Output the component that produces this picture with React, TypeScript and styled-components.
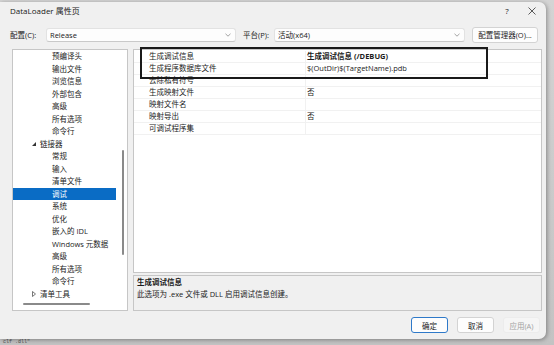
import React from 'react'
import styled, { createGlobalStyle } from 'styled-components'

const Global = createGlobalStyle`
  html, body {
    margin: 0;
    padding: 0;
    background: #c9c9c9;
  }
  body {
    font-family: "Open Sans", "Noto Sans CJK SC", sans-serif;
    font-size: 7.5px;
    color: #1b1b1b;
  }
`

const Desktop = styled.div`
  width: 554px;
  height: 345px;
  overflow: hidden;
  position: relative;
  background: linear-gradient(#d4d4d4, #c3c3c3);
`

const Backdrop = styled.div`
  position: absolute;
  left: 3px;
  bottom: 0;
  font-family: "Liberation Mono", monospace;
  font-size: 5px;
  line-height: 5px;
  color: #555;
`

const Window = styled.div`
  position: relative;
  margin-top: 2px;
  width: 546px;
  height: 337px;
  background: #f0f0f0;
  border-radius: 0 7px 7px 0;
  box-shadow: 1px 1px 4px rgba(0, 0, 0, 0.35);
  display: flex;
  flex-direction: column;
`

const TitleBar = styled.div`
  height: 17px;
  display: flex;
  align-items: center;
  padding: 0 10px;
  font-size: 8px;
  color: #202020;

  .title {
    flex: 1;
  }
  .help {
    width: 14px;
    text-align: center;
    margin-right: 14px;
    font-size: 8px;
  }
`

const ConfigRow = styled.div`
  display: flex;
  align-items: center;
  height: 15px;
  margin-top: 8px;
  padding-left: 10px;
`

const Label = styled.span<{ $w: number }>`
  width: ${(p) => p.$w}px;
  white-space: nowrap;
`

const Select = styled.div<{ $w: number }>`
  width: ${(p) => p.$w}px;
  height: 14px;
  box-sizing: border-box;
  background: #fdfdfd;
  border: 1px solid #e2e2e2;
  border-bottom-color: #c9c9c9;
  border-radius: 3px;
  display: flex;
  align-items: center;
  padding: 0 4px 0 3px;
  margin-right: 7px;

  span {
    flex: 1;
  }
`

const Button = styled.div<{ $w: number; $focus?: boolean; $disabled?: boolean }>`
  width: ${(p) => p.$w}px;
  height: 16px;
  box-sizing: border-box;
  display: flex;
  align-items: center;
  justify-content: center;
  border-radius: 3px;
  background: ${(p) => (p.$disabled ? '#f5f5f5' : '#fdfdfd')};
  border: 1px solid
    ${(p) => (p.$focus ? '#2e79c9' : p.$disabled ? '#ececec' : '#d3d3d3')};
  color: ${(p) => (p.$disabled ? '#a2a2a2' : '#1b1b1b')};
`

const Content = styled.div`
  display: flex;
  margin-top: 7px;
  padding-left: 12px;
  height: 262px;
  gap: 5px;
`

const TreePanel = styled.div`
  width: 116px;
  box-sizing: border-box;
  background: #fff;
  border: 1px solid #c6c6c6;
  display: flex;
  flex-direction: column;
`

const TreeBody = styled.div`
  flex: 1;
  display: flex;
`

const TreeList = styled.div`
  width: 103px;
`

const TreeRow = styled.div<{ $indent: number; $selected?: boolean }>`
  height: 12.5px;
  line-height: 12.5px;
  display: flex;
  align-items: center;
  padding-left: ${(p) => p.$indent}px;
  background: ${(p) => (p.$selected ? '#0a6cc5' : 'transparent')};
  color: ${(p) => (p.$selected ? '#fff' : '#1b1b1b')};
  white-space: nowrap;

  svg {
    margin-right: 4px;
  }
`

const VScroll = styled.div`
  flex: 1;
  display: flex;
  justify-content: center;
  padding-left: 2px;

  div {
    width: 2px;
    height: 105px;
    margin-top: 100px;
    background: #8a8a8a;
    border-radius: 1px;
  }
`

const HScroll = styled.div`
  height: 8px;
  padding-left: 10px;

  div {
    width: 67px;
    height: 2px;
    margin-top: 1px;
    background: #8a8a8a;
    border-radius: 1px;
  }
`

const RightColumn = styled.div`
  position: relative;
  width: 409px;
  display: flex;
  flex-direction: column;
  gap: 2px;
`

const Grid = styled.div`
  height: 224px;
  box-sizing: border-box;
  background: #fff;
  border: 1px solid #c6c6c6;
  padding-top: 1px;
`

const GridRow = styled.div<{ $bold?: boolean }>`
  display: flex;
  height: 12px;
  box-sizing: border-box;
  line-height: 11px;
  border-bottom: 1px solid #f1f1f1;

  .name {
    width: 172px;
    padding-left: 15px;
    box-sizing: border-box;
    border-right: 1px solid #f1f1f1;
  }
  .value {
    padding-left: 1px;
    font-weight: ${(p) => (p.$bold ? 700 : 400)};
  }
`

const Highlight = styled.div`
  position: absolute;
  left: 7px;
  top: -2px;
  width: 348px;
  height: 32px;
  box-sizing: border-box;
  border: 2px solid #1a1a1a;
  pointer-events: none;
`

const Description = styled.div`
  height: 36px;
  box-sizing: border-box;
  border: 1px solid #c6c6c6;
  background: #f0f0f0;
  padding-left: 3px;
  line-height: 12px;

  b {
    display: block;
    font-weight: 700;
  }
`

const Footer = styled.div`
  display: flex;
  justify-content: flex-end;
  gap: 9px;
  margin-top: 6px;
  padding-right: 6px;
`

const Chevron = () => (
  <svg width="6" height="4" viewBox="0 0 6 4">
    <path d="M0.5 0.8 L3 3.2 L5.5 0.8" fill="none" stroke="#8c8c8c" strokeWidth="0.8" />
  </svg>
)

const CloseIcon = () => (
  <svg width="8" height="8" viewBox="0 0 8 8">
    <path d="M0.5 0.5 L7.5 7.5 M7.5 0.5 L0.5 7.5" stroke="#333" strokeWidth="0.8" />
  </svg>
)

const Expanded = () => (
  <svg width="4" height="4" viewBox="0 0 4 4">
    <path d="M4 0 L4 4 L0 4 Z" fill="#333" />
  </svg>
)

const Collapsed = () => (
  <svg width="4" height="6" viewBox="0 0 4 6">
    <path d="M0.5 0.5 L3.5 3 L0.5 5.5 Z" fill="none" stroke="#555" strokeWidth="0.8" />
  </svg>
)

type Node = { text: string; level: 0 | 1; open?: boolean; selected?: boolean }

const tree: Node[] = [
  { text: '预编译头', level: 1 },
  { text: '输出文件', level: 1 },
  { text: '浏览信息', level: 1 },
  { text: '外部包含', level: 1 },
  { text: '高级', level: 1 },
  { text: '所有选项', level: 1 },
  { text: '命令行', level: 1 },
  { text: '链接器', level: 0, open: true },
  { text: '常规', level: 1 },
  { text: '输入', level: 1 },
  { text: '清单文件', level: 1 },
  { text: '调试', level: 1, selected: true },
  { text: '系统', level: 1 },
  { text: '优化', level: 1 },
  { text: '嵌入的 IDL', level: 1 },
  { text: 'Windows 元数据', level: 1 },
  { text: '高级', level: 1 },
  { text: '所有选项', level: 1 },
  { text: '命令行', level: 1 },
  { text: '清单工具', level: 0, open: false },
]

const props: { name: string; value: string; bold?: boolean }[] = [
  { name: '生成调试信息', value: '生成调试信息 (/DEBUG)', bold: true },
  { name: '生成程序数据库文件', value: '$(OutDir)$(TargetName).pdb' },
  { name: '去除私有符号', value: '' },
  { name: '生成映射文件', value: '否' },
  { name: '映射文件名', value: '' },
  { name: '映射导出', value: '否' },
  { name: '可调试程序集', value: '' },
]

export default function App() {
  return (
    <Desktop>
      <Global />
      <Backdrop>clf .dll"</Backdrop>
      <Window>
        <TitleBar>
          <span className="title">DataLoader 属性页</span>
          <span className="help">?</span>
          <CloseIcon />
        </TitleBar>

        <ConfigRow>
          <Label $w={36}>配置(C):</Label>
          <Select $w={190}>
            <span>Release</span>
            <Chevron />
          </Select>
          <Label $w={31}>平台(P):</Label>
          <Select $w={191}>
            <span>活动(x64)</span>
            <Chevron />
          </Select>
          <Button $w={66}>配置管理器(O)...</Button>
        </ConfigRow>

        <Content>
          <TreePanel>
            <TreeBody>
              <TreeList>
                {tree.map((n, i) => (
                  <TreeRow key={i} $indent={n.level === 1 ? 39 : 19} $selected={n.selected}>
                    {n.level === 0 && (n.open ? <Expanded /> : <Collapsed />)}
                    {n.text}
                  </TreeRow>
                ))}
              </TreeList>
              <VScroll>
                <div />
              </VScroll>
            </TreeBody>
            <HScroll>
              <div />
            </HScroll>
          </TreePanel>

          <RightColumn>
            <Grid>
              {props.map((p, i) => (
                <GridRow key={i} $bold={p.bold}>
                  <span className="name">{p.name}</span>
                  <span className="value">{p.value}</span>
                </GridRow>
              ))}
            </Grid>
            <Description>
              <b>生成调试信息</b>
              此选项为 .exe 文件或 DLL 启用调试信息创建。
            </Description>
            <Highlight />
          </RightColumn>
        </Content>

        <Footer>
          <Button $w={37} $focus>确定</Button>
          <Button $w={37}>取消</Button>
          <Button $w={37} $disabled>应用(A)</Button>
        </Footer>
      </Window>
    </Desktop>
  )
}
